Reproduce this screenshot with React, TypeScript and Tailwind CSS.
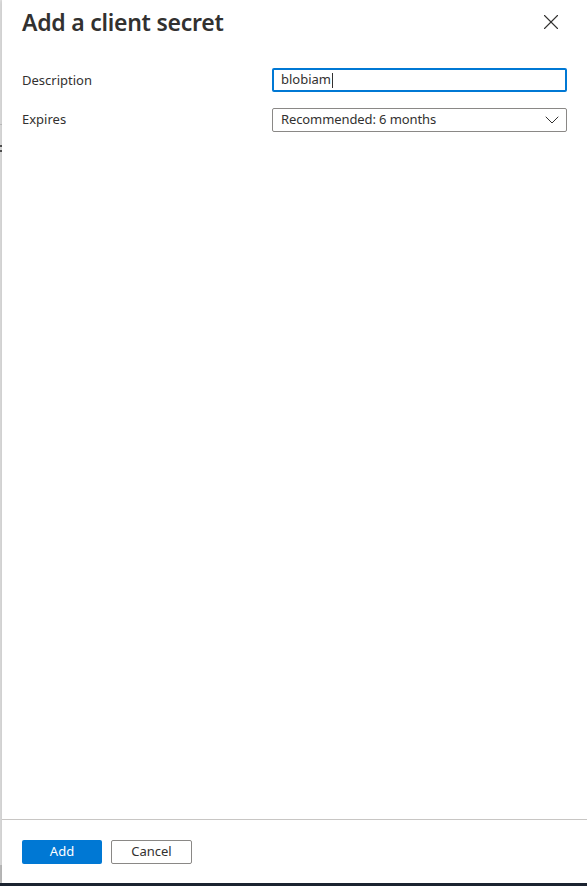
import { ChevronDown, X } from "lucide-react";

const font = { fontFamily: '"Segoe UI", "Noto Sans", sans-serif' };

export default function App() {
  return (
    <div className="flex h-[886px] w-[587px] flex-col bg-white text-[#323130]" style={font}>
      <div className="flex flex-1">
        {/* page behind the blade */}
        <div className="flex w-[2px] flex-col bg-[#e6e6e6]">
          <div className="h-[124px]" />
          <div className="h-px bg-[#c8c8c8]" />
          <div className="h-[20px]" />
          <div className="h-[2px] bg-[#555]" />
          <div className="h-[3px]" />
          <div className="h-[2px] bg-[#555]" />
          <div className="flex-1" />
          <div className="h-[18px] bg-[#c4c4c4]" />
        </div>

        {/* blade */}
        <div className="flex flex-1 flex-col bg-white shadow-[-2px_0_4px_rgba(0,0,0,0.12)]">
          <div className="flex items-start justify-between pl-[20px] pr-[23px] pt-[6px]">
            <h1 className="text-[23px] font-semibold leading-[32px] tracking-[-0.25px] text-[#323130]">
              Add a client secret
            </h1>
            <button className="mt-[3px] text-[#323130]">
              <X size={26} strokeWidth={1} />
            </button>
          </div>

          <div className="mt-[30px] flex flex-col gap-[16px] pl-[20px] pr-[20px]">
            <div className="flex items-center">
              <span className="w-[250px] pt-px text-[13px]">Description</span>
              <div className="flex h-[24px] flex-1 items-center rounded-[2px] border-2 border-[#0078d4] px-[7px] text-[13px]">
                blobiam
                <span className="ml-px inline-block h-[15px] w-px bg-[#323130]" />
              </div>
            </div>
            <div className="flex items-center">
              <span className="w-[250px] text-[13px]">Expires</span>
              <div className="flex h-[24px] flex-1 items-center justify-between rounded-[2px] border border-[#8a8886] pl-[8px] pr-[2px] text-[13px] tracking-[-0.1px]">
                <span>Recommended: 6 months</span>
                <ChevronDown size={24} strokeWidth={1} />
              </div>
            </div>
          </div>

          <div className="flex-1" />

          <div className="border-t border-[#c8c6c4] pb-[19px] pl-[20px] pt-[20px]">
            <div className="flex gap-[9px]">
              <button className="h-[24px] w-[80px] rounded-[2px] bg-[#0078d4] text-[13px] text-white">Add</button>
              <button className="h-[24px] w-[81px] rounded-[2px] border border-[#8a8886] bg-white text-[13px] text-[#323130]">
                Cancel
              </button>
            </div>
          </div>
        </div>
      </div>
      <div className="h-[3px] bg-[#1b2330]" />
    </div>
  );
}
